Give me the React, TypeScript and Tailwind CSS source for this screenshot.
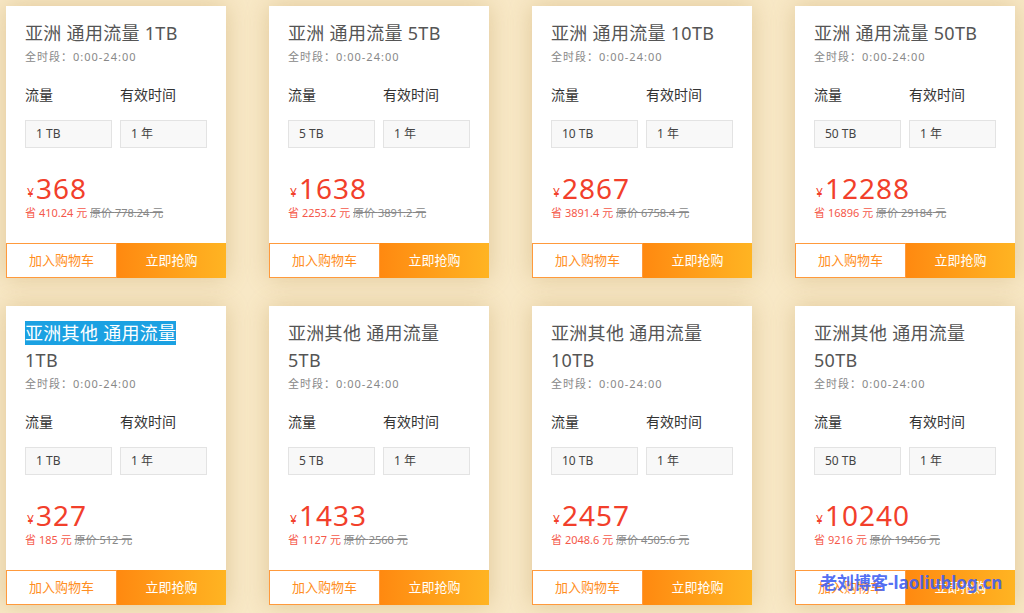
import React from "react";

type Item = {
  title: string;
  highlight?: string;
  rest?: string;
  amount: string;
  price: string;
  save: string;
  orig: string;
};

const row1: Item[] = [
  { title: "亚洲 通用流量 1TB", amount: "1 TB", price: "368", save: "410.24", orig: "778.24" },
  { title: "亚洲 通用流量 5TB", amount: "5 TB", price: "1638", save: "2253.2", orig: "3891.2" },
  { title: "亚洲 通用流量 10TB", amount: "10 TB", price: "2867", save: "3891.4", orig: "6758.4" },
  { title: "亚洲 通用流量 50TB", amount: "50 TB", price: "12288", save: "16896", orig: "29184" },
];

const row2: Item[] = [
  { title: "", highlight: "亚洲其他 通用流量", rest: " 1TB", amount: "1 TB", price: "327", save: "185", orig: "512" },
  { title: "亚洲其他 通用流量 5TB", amount: "5 TB", price: "1433", save: "1127", orig: "2560" },
  { title: "亚洲其他 通用流量 10TB", amount: "10 TB", price: "2457", save: "2048.6", orig: "4505.6" },
  { title: "亚洲其他 通用流量 50TB", amount: "50 TB", price: "10240", save: "9216", orig: "19456" },
];

const font = { fontFamily: '"Noto Sans", "Noto Sans CJK SC", sans-serif' };

function Card({ item }: { item: Item }) {
  return (
    <div className="w-[220px] bg-white flex flex-col shadow-[0_0_22px_rgba(175,135,60,0.32)]">
      <div className="px-[19px] pt-[14px]">
        <div className="text-[18px] leading-[27px] text-[#555] tracking-[0.3px]">
          {item.highlight ? (
            <>
              <span className="bg-[#1ba1e2] text-white">{item.highlight}</span>
              {item.rest}
            </>
          ) : (
            item.title
          )}
        </div>
        <div className="mt-[2px] text-[11px] leading-[16px] text-[#888] tracking-[1px]">全时段：0:00-24:00</div>
        <div className="mt-[20px] grid grid-cols-2 gap-2 text-[14px] leading-[20px] text-[#333]">
          <div>流量</div>
          <div>有效时间</div>
        </div>
        <div className="mt-[15px] grid grid-cols-2 gap-2">
          <div className="h-[28px] bg-[#f8f8f8] border border-[#e3e3e3] flex items-center pl-[10px] text-[12px] text-[#444]">
            {item.amount}
          </div>
          <div className="h-[28px] bg-[#f8f8f8] border border-[#e3e3e3] flex items-center pl-[10px] text-[12px] text-[#444]">
            1 年
          </div>
        </div>
        <div className="mt-[24px] flex items-end h-[32px] text-[#f23f2b]">
          <span className="text-[12px] leading-[12px] mb-[5px] ml-[2px] mr-[2px]">¥</span>
          <span className="text-[28px] leading-[32px] tracking-[1px]">{item.price}</span>
        </div>
        <div className="mt-[1px] text-[11px] leading-[16px]">
          <span className="text-[#f5584a]">省 {item.save} 元 </span>
          <span className="text-[#888] line-through">原价 {item.orig} 元</span>
        </div>
      </div>
      <div className="mt-[22px] flex h-[35px] text-[13px]">
        <div className="flex-1 border border-[#ff9a3c] bg-white text-[#ff8e22] flex items-center justify-center">
          加入购物车
        </div>
        <div className="flex-1 bg-gradient-to-r from-[#ff8910] to-[#ffb422] text-white flex items-center justify-center">
          立即抢购
        </div>
      </div>
    </div>
  );
}

export default function App() {
  return (
    <div
      className="relative w-[1024px] h-[613px] overflow-hidden bg-[#f8e8c6] pt-[6px] pl-[6px]"
      style={font}
    >
      <div className="flex flex-col gap-[28px]">
        <div className="flex items-start gap-[43px]">
          {row1.map((it, i) => (
            <Card key={i} item={it} />
          ))}
        </div>
        <div className="flex items-start gap-[43px]">
          {row2.map((it, i) => (
            <Card key={i} item={it} />
          ))}
        </div>
      </div>
      <div className="absolute left-[820px] top-[571px] text-[17px] leading-[24px] font-bold text-[#3d5df2]/90 whitespace-nowrap">
        老刘博客-laoliublog.cn
      </div>
    </div>
  );
}
